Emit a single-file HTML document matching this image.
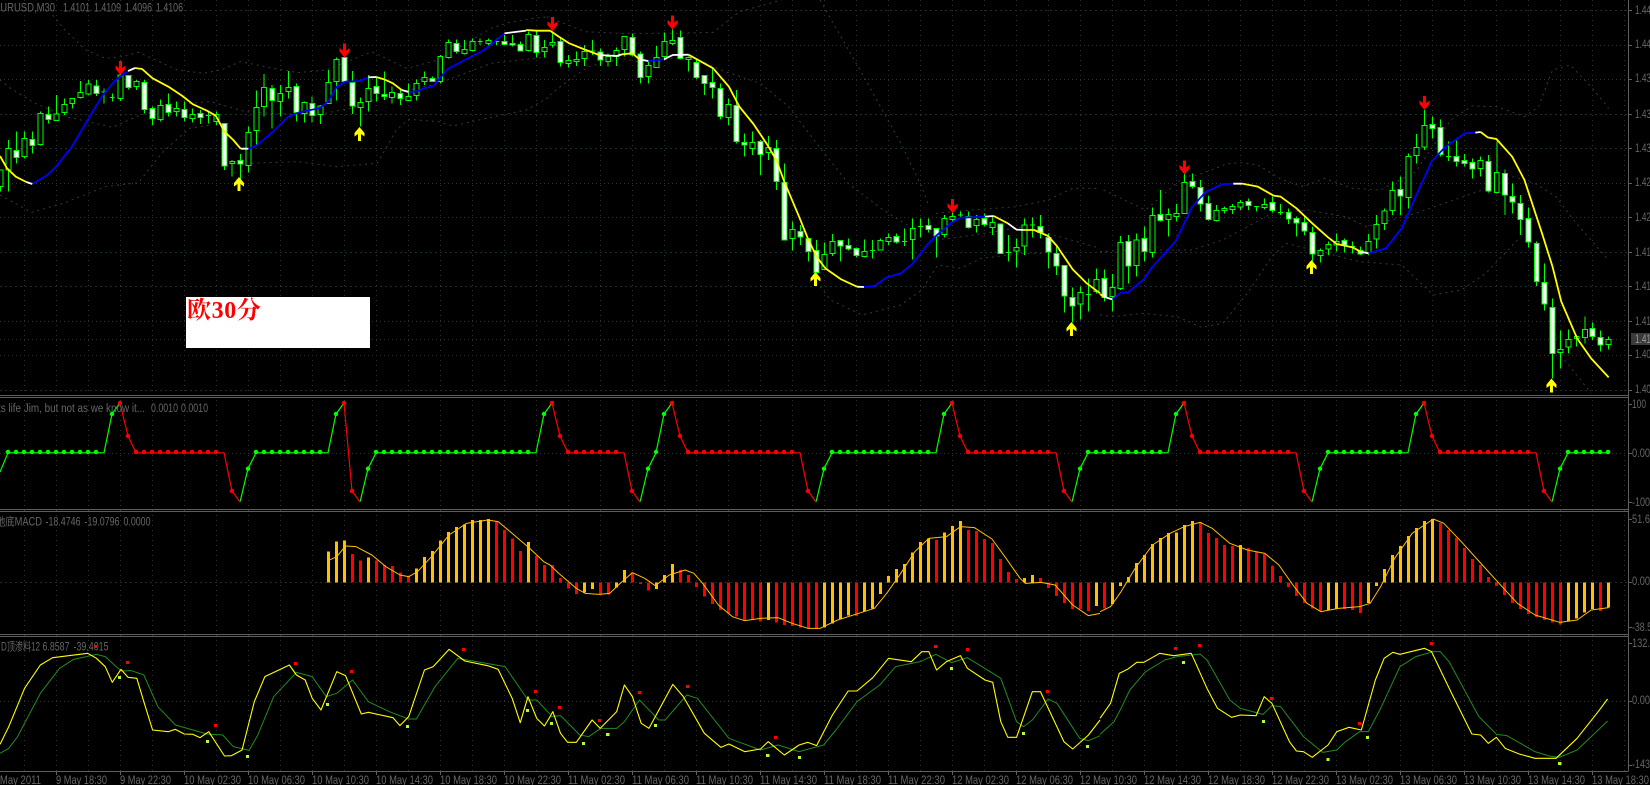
<!DOCTYPE html>
<html lang="zh"><head><meta charset="utf-8"><title>EURUSD,M30</title>
<style>
html,body{margin:0;padding:0;background:#000;width:1650px;height:785px;overflow:hidden}
svg{display:block}
path{fill:none;vector-effect:non-scaling-stroke}
text{font-family:"Liberation Sans","Noto Sans CJK SC",sans-serif;font-size:11.5px;fill:#666}
.w{stroke:#0f0;stroke-width:1;shape-rendering:crispEdges}
.u{stroke:#0f0;stroke-width:1;fill:#000;shape-rendering:crispEdges}
.d{stroke:#0f0;stroke-width:1;fill:#fff;shape-rendering:crispEdges}
.y{stroke:#ff0;stroke-width:1.8;stroke-linejoin:round}
.bl{stroke:#00f;stroke-width:1.8;stroke-linejoin:round}
.wh{stroke:#fff;stroke-width:1.8}
.b{stroke:#383838;stroke-width:1;stroke-dasharray:2 4}
.gd{stroke:#333;stroke-width:1;stroke-dasharray:1 3;shape-rendering:crispEdges}
.gt{stroke:#183030;stroke-width:1;stroke-dasharray:2 3;shape-rendering:crispEdges}
.lg{stroke:#0f0;stroke-width:1.2;stroke-linejoin:round}
.lr{stroke:#f00;stroke-width:1.2;stroke-linejoin:round}
.dg{stroke:#0f0;stroke-width:4.6;stroke-linecap:round;stroke-dasharray:0 8}
.dr{stroke:#f00;stroke-width:4.6;stroke-linecap:round;stroke-dasharray:0 8}
.pg{stroke:#0f0;stroke-width:4.4;stroke-linecap:round}
.pr{stroke:#f00;stroke-width:4.4;stroke-linecap:round}
.hg{stroke:#ffc000;stroke-width:3;shape-rendering:crispEdges}
.hr{stroke:#f00;stroke-width:3;shape-rendering:crispEdges}
.sg{stroke:#ffc000;stroke-width:1;stroke-linejoin:round}
.ky{stroke:#ff0;stroke-width:1.1;stroke-linejoin:round}
.kg{stroke:#228b22;stroke-width:1;stroke-linejoin:round}
.qr{stroke:#f00;stroke-width:3;shape-rendering:crispEdges}
.ql{stroke:#adff2f;stroke-width:3;shape-rendering:crispEdges}
.ax{stroke:#5e5e5e;stroke-width:1;shape-rendering:crispEdges}
.sep{stroke:#5e5e5e;stroke-width:1;shape-rendering:crispEdges}
</style></head><body>
<svg width="1650" height="785" viewBox="0 0 1650 785" xmlns="http://www.w3.org/2000/svg">
<defs>
<pattern id="vg" x="24" y="0" width="32" height="5" patternUnits="userSpaceOnUse"><rect width="1" height="1" fill="#303030"/></pattern>
<path id="ad" style="stroke:none;fill:#f00" d="M-1.5-14h3v7l3.5-2.5v3.5L0 0l-5-6v-3.5L-1.5-7z"/>
<path id="au" style="stroke:none;fill:#ff0" d="M-1.5 14h3v-7l3.5 2.5v-3.5L0 0l-5 6v3.5L-1.5 7z"/>
</defs>
<rect width="1650" height="785" fill="#000"/>
<rect x="0" y="0" width="1628" height="771" fill="url(#vg)"/>

<!-- main grid -->
<path class="gt" d="M0 10.5H1628M0 114.5H1628M0 148.5H1628M0 252.5H1628M0 286.5H1628M0 390.5H1628"/>
<path class="gd" d="M0 45.5H1628M0 79.5H1628M0 183.5H1628M0 217.5H1628M0 321.5H1628M0 339.5H1628M0 355.5H1628"/>

<!-- segment 1 -->
<g transform="scale(.3508 .33333)">
<path class="b" d="M150 45L185 90L245 150L300 175L345 170L395 157L450 183L505 210L580 220L630 210L685 185L780 205L850 218L930 210L1060 155L1160 205L1250 180L1400 85L1450 68L1520 55L1568 50"/>
<path class="b" d="M0 240L30 265L100 310L190 350L320 382L400 345L540 310L600 305L700 335L770 340L900 345L1000 325L1100 285L1250 250L1400 190L1568 170"/>
<path class="b" d="M0 585L90 637L180 610L300 560L395 548L460 460L540 385L600 375M700 490L850 485L960 500L1075 490L1130 390L1165 358L1250 365L1290 378L1400 352L1500 330L1568 290"/>
<path class="w" d="M2 510V575M24 420V575M47 395V490M70 395V475M92 395V460M115 335V437M138 320V370M161 285V362M184 295V345M206 295V325M229 243V295M252 240V285M275 240V288M297 265V310M320 280V305M343 220V303M366 225V268M389 240V270M412 240V340M435 320V375M458 298V365M480 280V350M503 305V350M526 305V365M549 325V368M571 330V372M594 335V370M617 335V375M640 370V510M662 480V530M686 462V545M708 380V518M731 272V435M753 222V350M776 255V385M799 255V350M822 213V295M845 250V365M868 305V368M890 290V368M914 315V372M936 210V312M959 172V302M982 170V245M1005 213V342M1028 292V380M1050 225V335M1073 230V305M1096 215V300M1118 260V310M1141 270V315M1164 250V302M1187 238V302M1210 215V255M1233 230V245M1255 165V250M1278 118V175M1301 118V160M1324 120V163M1347 115V155M1369 115V135M1392 115V138M1415 115V135M1438 105V135M1461 105V140M1484 125V155M1507 95V155M1529 95V172M1552 120V172"/>
<path class="u" d="M-5 510h14V560h-14zM17 445h14V510h-14zM63 415h14V470h-14zM108 340h14V434h-14zM154 342h14V361h-14zM177 314h14V338h-14zM199 295h14V311h-14zM222 278h14V293h-14zM245 252h14V282h-14zM336 225h14V296h-14zM382 245h14V259h-14zM451 317h14V358h-14zM496 325h14V334h-14zM542 344h14V356h-14zM610 343h14V365h-14zM655 484h14V490h-14zM701 397h14V496h-14zM724 322h14V392h-14zM746 263h14V320h-14zM792 280h14V304h-14zM815 262h14V274h-14zM861 308h14V340h-14zM907 318h14V344h-14zM929 247h14V310h-14zM952 178h14V244h-14zM1021 308h14V322h-14zM1043 265h14V304h-14zM1111 278h14V292h-14zM1157 289h14V301h-14zM1180 250h14V286h-14zM1203 233h14V244h-14zM1248 170h14V245h-14zM1271 127h14V172h-14zM1317 149h14V161h-14zM1340 124h14V152h-14zM1385 121h14V131h-14zM1500 104h14V151h-14zM1545 142h14V154h-14zM290 276h14M313 293h14M587 346h14M1362 124h14M1408 124h14"/>
<path class="d" d="M40 451h14V472h-14zM85 418h14V436h-14zM131 343h14V358h-14zM268 258h14V280h-14zM359 226h14V262h-14zM405 247h14V328h-14zM428 325h14V355h-14zM473 314h14V337h-14zM519 328h14V352h-14zM564 340h14V352h-14zM633 371h14V498h-14zM679 481h14V492h-14zM769 266h14V301h-14zM838 260h14V338h-14zM883 310h14V346h-14zM975 172h14V244h-14zM998 248h14V318h-14zM1066 260h14V280h-14zM1089 284h14V289h-14zM1134 280h14V296h-14zM1226 236h14V244h-14zM1294 130h14V155h-14zM1431 124h14V133h-14zM1454 130h14V135h-14zM1477 134h14V153h-14zM1522 106h14V157h-14z"/>
<path class="y" d="M0 468L20 505L45 530L75 546M385 204L405 207L435 235L480 260L520 288L550 313L590 332L615 347L640 395L665 420L686 446M1072 231L1095 238L1120 250L1145 270M1500 90L1530 92L1568 92"/>
<path class="bl" d="M92 552L135 525L160 500L205 440L250 360L290 290L325 245L345 228L365 213M708 446L730 438L775 398L822 350L850 338L885 330L910 325L935 305L960 260L985 245L1025 243L1050 232M1165 276L1190 274L1205 266L1235 258L1275 208L1325 180L1380 150L1415 120L1438 100"/>
<path class="wh" d="M75 546L92 552M365 213L385 204M686 446L708 446M1050 232L1072 231M1145 270L1165 276M1438 100L1500 92"/>
</g>

<!-- segment 2 -->
<g transform="translate(550 0) scale(.3508 .33333)">
<path class="b" d="M0 285L60 235L110 200L200 175L280 190L390 165L500 215L600 250L680 320L760 430L850 550L950 630L1025 680"/>
<path class="b" d="M-10 50L100 95L200 100L350 100L465 97L540 35L660 0"/>
<path class="b" d="M770 0L840 130L900 240L1000 430L1060 560L1080 620"/>
<path class="b" d="M770 860L800 900L890 945L1000 915L1060 870L1105 795L1170 805L1230 775L1350 760L1400 760"/>
<path class="b" d="M1100 720L1210 705L1350 680L1420 700L1568 745M1100 640L1180 632L1330 620L1420 600L1490 565L1568 565"/>
<path class="w" d="M7 100V142M30 115V200M53 165V203M75 155V198M98 135V198M121 120V165M144 145V198M166 160V200M189 142V198M212 108V170M235 100V170M258 155V250M281 180V250M304 138V203M326 98V180M349 88V135M372 92V178M395 170V215M418 180V237M440 225V285M463 205V295M486 250V358M509 295V375M532 270V430M555 400V470M577 395V465M600 420V525M623 408V480M646 420V570M668 490V722M691 665V752M714 675V735M737 715V785M760 720V820M782 728V810M805 702V768M828 720V785M851 715V752M874 742V772M896 718V772M919 720V775M942 715V752M965 700V735M988 700V730M1011 685V738M1034 655V778M1056 655V712M1079 655V698M1102 688V772M1125 645V712M1147 630V668M1170 635V655M1193 635V685M1216 645V698M1239 640V680M1261 650V705M1284 670V762M1307 705V785M1330 715V802M1353 655V765M1376 652V712M1398 645V715M1421 700V805M1444 740V825M1467 795V938M1489 862V968M1512 860V958M1535 835V935M1558 805V880"/>
<path class="u" d="M0 128h14V135h-14zM46 181h14V190h-14zM68 178h14V184h-14zM91 154h14V176h-14zM159 170h14V185h-14zM182 152h14V170h-14zM205 110h14V148h-14zM274 196h14V230h-14zM297 173h14V203h-14zM319 124h14V170h-14zM342 121h14V130h-14zM388 172h14V178h-14zM502 313h14V352h-14zM570 428h14V445h-14zM616 443h14V457h-14zM684 688h14V716h-14zM775 763h14V808h-14zM798 725h14V760h-14zM889 755h14V769h-14zM935 722h14V750h-14zM958 712h14V724h-14zM1027 686h14V718h-14zM1118 656h14V704h-14zM1140 650h14V658h-14zM1209 658h14V677h-14zM1254 668h14V682h-14zM1323 743h14V753h-14zM1346 675h14V738h-14zM1505 878h14V912h-14zM1551 838h14V875h-14zM114 153h14M912 751h14M1004 724h14M1049 680h14M1163 645h14M1300 757h14M1369 675h14M1528 884h14"/>
<path class="d" d="M23 125h14V187h-14zM137 156h14V180h-14zM228 113h14V165h-14zM251 162h14V232h-14zM365 112h14V175h-14zM411 187h14V232h-14zM433 227h14V250h-14zM456 248h14V262h-14zM479 265h14V350h-14zM525 317h14V425h-14zM548 428h14V435h-14zM593 425h14V463h-14zM639 445h14V545h-14zM661 547h14V720h-14zM707 695h14V711h-14zM730 715h14V754h-14zM753 752h14V817h-14zM821 722h14V738h-14zM844 737h14V747h-14zM867 746h14V766h-14zM981 710h14V726h-14zM1072 677h14V688h-14zM1095 686h14V708h-14zM1186 650h14V682h-14zM1232 655h14V674h-14zM1277 672h14V760h-14zM1391 680h14V697h-14zM1414 712h14V756h-14zM1437 760h14V798h-14zM1460 797h14V888h-14zM1482 893h14V918h-14z"/>
<path class="y" d="M0 92L25 110L55 130L95 147L140 165M205 163L235 160L255 178M395 164L465 205L510 260L540 320L580 372L620 435L645 480L668 545L710 650L735 715L760 770L785 805L830 838L875 860M1265 648L1305 670M1350 690L1380 690L1420 708L1445 738L1490 808L1530 850L1568 880"/>
<path class="bl" d="M280 183L325 178M895 861L925 858L960 832L1000 820L1035 790L1075 735L1100 708L1145 668L1170 653L1240 650"/>
<path class="wh" d="M140 165L190 168L205 163M255 178L280 183M325 178L350 165L395 164M875 860L895 861M1240 650L1265 648M1305 670L1330 689L1350 690"/>
</g>

<!-- segment 3 -->
<g transform="translate(1100 0) scale(.3508 .33333)">
<path class="b" d="M10 570L130 630L240 530L280 525L360 492L400 488L450 495L520 540L580 560L640 535L720 565L800 570L900 515L1000 360L1060 318L1130 320L1210 350L1250 320L1290 210L1340 195L1400 260L1450 325"/>
<path class="b" d="M0 755L80 750L260 750L350 720L490 640L590 630L700 650L760 680L900 640L1090 570L1180 530L1240 550L1300 590L1350 660L1445 775"/>
<path class="b" d="M0 945L40 950L120 940L220 950L290 982L350 970L420 880L490 770L530 730L740 785L860 795L950 885L1030 870L1100 820L1190 720M1290 1040L1340 1100L1400 1180"/>
<path class="w" d="M13 808V905M36 822V935M59 708V870M81 705V850M104 700V830M127 680V785M150 622V772M172 570V665M195 625V710M218 612V665M241 520V642M264 520V565M287 540V635M309 588V662M332 615V665M355 620V640M378 612V642M401 600V630M423 595V630M446 618V635M469 595V628M492 590V638M515 612V645M538 625V672M560 650V710M583 650V705M606 680V785M629 745V788M651 725V765M674 700V755M697 715V758M720 725V760M743 740V765M765 702V765M788 645V745M811 625V690M834 545V645M857 530V645M880 460V625M902 402V490M925 330V450M948 350V415M971 358V470M993 425V483M1016 422V500M1039 462V500M1062 475V535M1085 470V530M1108 465V578M1131 425V580M1154 508V645M1176 550V640M1199 585V705M1222 622V742M1245 725V858M1267 790V932M1290 895V1135M1313 992V1105M1336 988V1060M1359 1005V1040M1382 950V1030M1404 968V1020M1427 992V1055M1450 1010V1048"/>
<path class="u" d="M29 862h14V890h-14zM52 727h14V866h-14zM97 720h14V797h-14zM143 646h14V757h-14zM188 644h14V658h-14zM211 640h14V650h-14zM234 547h14V640h-14zM325 631h14V661h-14zM348 625h14V631h-14zM371 619h14V628h-14zM394 608h14V621h-14zM462 613h14V622h-14zM622 751h14V766h-14zM644 733h14V747h-14zM667 725h14V735h-14zM758 725h14V757h-14zM781 673h14V717h-14zM804 633h14V670h-14zM827 571h14V631h-14zM873 469h14V593h-14zM895 442h14V466h-14zM918 376h14V441h-14zM1078 482h14V505h-14zM1124 518h14V577h-14zM1306 1048h14V1057h-14zM1329 1019h14V1041h-14zM1352 1010h14V1016h-14zM1375 988h14V1012h-14zM1443 1019h14V1033h-14zM439 619h14M508 638h14M713 739h14M986 469h14"/>
<path class="d" d="M6 835h14V892h-14zM74 725h14V798h-14zM120 716h14V754h-14zM165 643h14V661h-14zM257 545h14V559h-14zM280 563h14V612h-14zM302 610h14V659h-14zM416 605h14V616h-14zM485 607h14V632h-14zM531 638h14V657h-14zM553 656h14V669h-14zM576 668h14V693h-14zM599 697h14V762h-14zM690 722h14V735h-14zM736 752h14V762h-14zM850 568h14V588h-14zM941 373h14V385h-14zM964 383h14V463h-14zM1009 470h14V484h-14zM1032 482h14V490h-14zM1055 487h14V507h-14zM1101 485h14V573h-14zM1147 521h14V585h-14zM1169 590h14V606h-14zM1192 611h14V658h-14zM1215 656h14V726h-14zM1238 731h14V845h-14zM1260 848h14V912h-14zM1283 922h14V1060h-14zM1397 986h14V1009h-14zM1420 1013h14V1035h-14z"/>
<path class="y" d="M0 882L10 890M405 551L450 560L495 587L515 590L560 625L605 670L650 712L675 732L720 742L743 755M1085 396L1105 412L1130 417L1175 470L1210 540L1260 700L1290 800L1315 905L1360 1015L1400 1075L1450 1132"/>
<path class="bl" d="M35 898L60 878L80 877L125 838L150 800L215 725L262 622L300 577L350 552L380 551M765 760L815 745L860 685L900 590L945 485L985 440L1040 400L1070 398"/>
<path class="wh" d="M10 890L35 898M380 551L405 551M743 755L765 760M1070 398L1085 396"/>
</g>

<!-- arrows -->
<use href="#ad" x="120.5" y="75"/><use href="#ad" x="344.5" y="57.5"/><use href="#ad" x="552.5" y="31"/><use href="#ad" x="672.5" y="29.5"/><use href="#ad" x="952.5" y="213"/><use href="#ad" x="1184.5" y="174.5"/><use href="#ad" x="1424.5" y="110"/>
<use href="#au" x="239" y="177"/><use href="#au" x="359.5" y="127"/><use href="#au" x="815.5" y="272"/><use href="#au" x="1071.5" y="322"/><use href="#au" x="1311.5" y="260"/><use href="#au" x="1551.5" y="378.5"/>

<!-- white label -->
<rect x="186" y="297" width="184" height="51" fill="#fff"/>
<text x="187" y="318" style="font-family:'Liberation Serif','Noto Serif CJK SC',serif;font-size:24px;font-weight:bold;fill:#f00;letter-spacing:.6px">欧30分</text>

<!-- legend main -->
<text x="-6" y="11.5" textLength="61" lengthAdjust="spacingAndGlyphs">EURUSD,M30</text>
<text x="63" y="11.5" textLength="27" lengthAdjust="spacingAndGlyphs">1.4101</text>
<text x="94" y="11.5" textLength="27" lengthAdjust="spacingAndGlyphs">1.4109</text>
<text x="125" y="11.5" textLength="27" lengthAdjust="spacingAndGlyphs">1.4096</text>
<text x="156" y="11.5" textLength="27" lengthAdjust="spacingAndGlyphs">1.4106</text>

<!-- panel separators -->
<path class="sep" d="M0 395.5H1628M0 397.5H1628M0 509.5H1628M0 511.5H1628M0 634.5H1628M0 636.5H1628"/>

<!-- panel 1 -->
<path class="gd" d="M0 453.5H1628"/>
<path class="lg" d="M0 472L8 452.8H104L112 414L120 403M240 502L248 468.7L256 452.8H328L336 414L344 403M360 502L368 468.7L376 452.8H536L544 414L552 403M640 502L648 468.7L656 452.8L664 414L672 403M816 502L824 468.7L832 452.8H936L944 414L952 403M1072 502L1080 468.7L1088 452.8H1168L1176 414L1184 403M1312 502L1320 468.7L1328 452.8H1408L1416 414L1424 403M1552 502L1560 468.7L1568 452.8H1608"/>
<path class="lr" d="M120 403L128 436L136 452.8H224L232 491L240 502M344 403L352 491L360 502M552 403L560 436L568 452.8H624L632 491L640 502M672 403L680 436L688 452.8H800L808 491L816 502M952 403L960 436L968 452.8H1056L1064 491L1072 502M1184 403L1192 436L1200 452.8H1296L1304 491L1312 502M1424 403L1432 436L1440 452.8H1536L1544 491L1552 502"/>
<path class="dg" d="M8 452H97M256 452H321M376 452H529M832 452H929M1088 452H1161M1328 452H1401M1568 452H1609"/>
<path class="dr" d="M136 452H217M568 452H617M688 452H793M968 452H1049M1200 452H1289M1440 452H1529"/>
<path class="pg" d="M112 414h.01M248 468.7h.01M336 414h.01M368 468.7h.01M544 414h.01M648 468.7h.01M656 452h.01M664 414h.01M824 468.7h.01M944 414h.01M1080 468.7h.01M1176 414h.01M1320 468.7h.01M1416 414h.01M1560 468.7h.01"/>
<path class="pr" d="M120 403h.01M128 436h.01M232 491h.01M344 403h.01M352 491h.01M552 403h.01M560 436h.01M632 491h.01M672 403h.01M680 436h.01M808 491h.01M952 403h.01M960 436h.01M1064 491h.01M1184 403h.01M1192 436h.01M1304 491h.01M1424 403h.01M1432 436h.01M1544 491h.01"/>
<text x="-2" y="412" textLength="147" lengthAdjust="spacingAndGlyphs">ts life Jim, but not as we know it...</text>
<text x="151" y="412" textLength="27" lengthAdjust="spacingAndGlyphs">0.0010</text>
<text x="181" y="412" textLength="27" lengthAdjust="spacingAndGlyphs">0.0010</text>

<!-- panel 2 -->
<path class="gt" d="M0 582.5H1628"/>
<g transform="translate(.5 395) scale(1 .33333)">
<path class="hg" d="M328 562V470M336 562V440M344 562V437M368 562V488M416 562V520M424 562V486M432 562V468M440 562V437M448 562V411M456 562V396M464 562V388M472 562V375M480 562V375M488 562V372M528 562V441M584 562V592M592 562V582M616 562V577M624 562V525M656 562V582M664 562V540M672 562V507M768 562V675M824 562V697M832 562V685M840 562V672M848 562V662M864 562V650M872 562V640M880 562V597M888 562V543M896 562V522M904 562V507M912 562V472M920 562V441M928 562V430M944 562V412M952 562V393M960 562V378M1024 562V549M1032 562V540M1096 562V633M1112 562V627M1120 562V573M1128 562V546M1136 562V504M1144 562V480M1152 562V447M1160 562V429M1168 562V414M1176 562V412M1184 562V390M1192 562V378M1240 562V450M1328 562V645M1336 562V640M1368 562V624M1376 562V573M1384 562V522M1392 562V480M1400 562V453M1408 562V423M1416 562V399M1424 562V378M1432 562V372M1568 562V680M1576 562V670M1584 562V652M1592 562V642M1608 562V638"/>
<path class="hr" d="M352 562V477M360 562V497M376 562V497M384 562V510M392 562V513M400 562V533M408 562V543M496 562V378M504 562V405M512 562V431M520 562V468M536 562V483M544 562V510M552 562V510M560 562V549M568 562V580M576 562V597M600 562V598M608 562V598M632 562V532M640 562V567M648 562V587M680 562V525M688 562V540M696 562V576M704 562V605M712 562V627M720 562V645M728 562V655M736 562V665M744 562V677M752 562V675M760 562V680M776 562V683M784 562V690M792 562V693M800 562V697M808 562V700M816 562V702M856 562V663M936 562V435M968 562V405M976 562V408M984 562V432M992 562V444M1000 562V492M1008 562V531M1016 562V552M1040 562V549M1048 562V579M1056 562V603M1064 562V624M1072 562V642M1080 562V642M1088 562V648M1104 562V640M1200 562V381M1208 562V414M1216 562V429M1224 562V450M1232 562V453M1248 562V459M1256 562V471M1264 562V477M1272 562V513M1280 562V543M1288 562V576M1296 562V603M1304 562V624M1312 562V640M1320 562V648M1344 562V642M1352 562V645M1360 562V654M1440 562V384M1448 562V405M1456 562V429M1464 562V459M1472 562V492M1480 562V510M1488 562V546M1496 562V573M1504 562V600M1512 562V624M1520 562V642M1528 562V657M1536 562V666M1544 562V675M1552 562V682M1560 562V688M1600 562V648"/>
</g>
<g transform="translate(0 395) scale(.3508 .33333)">
<path class="sg" d="M935 497L960 485L985 453L1015 455L1060 480L1100 515L1140 540L1165 545L1190 530L1230 485L1280 420L1330 385L1390 375L1420 380L1460 415L1510 460L1550 500L1568 510"/>
</g>
<g transform="translate(550 395) scale(.3508 .33333)">
<path class="sg" d="M0 510L25 535L75 580L100 595L140 598L170 595L200 565L235 533L270 550L300 572L340 540L385 525L410 535L435 565L480 630L520 665L555 677L600 670L650 668L690 685L735 700L770 700L820 675L880 655L925 640L960 595L1000 535L1040 470L1080 430L1130 425L1170 395L1210 398L1260 432L1300 490L1340 550L1355 565L1400 562L1440 570L1490 630L1535 662L1568 655"/>
</g>
<g transform="translate(1100 395) scale(.3508 .33333)">
<path class="sg" d="M0 650L30 635L60 590L100 520L150 450L200 415L240 395L285 382L320 400L370 445L420 465L470 475L510 510L550 570L590 625L630 650L680 640L740 635L770 625L800 575L840 490L890 415L950 372L980 385L1030 440L1090 510L1140 568L1190 625L1240 660L1310 682L1360 675L1400 645L1450 638"/>
</g>
<text x="-4" y="525.7" textLength="46" lengthAdjust="spacingAndGlyphs">地底MACD</text>
<text x="45.5" y="525.7" textLength="35" lengthAdjust="spacingAndGlyphs">-18.4746</text>
<text x="84.5" y="525.7" textLength="35" lengthAdjust="spacingAndGlyphs">-19.0796</text>
<text x="123.5" y="525.7" textLength="27" lengthAdjust="spacingAndGlyphs">0.0000</text>

<!-- panel 3 -->
<path class="gd" d="M0 701.5H1628"/>
<text x="1" y="650.7" textLength="39" lengthAdjust="spacingAndGlyphs">D顶渗料12</text>
<text x="42.5" y="650.7" textLength="27" lengthAdjust="spacingAndGlyphs">6.8587</text>
<text x="73.5" y="650.7" textLength="35" lengthAdjust="spacingAndGlyphs">-39.4015</text>
<g transform="translate(0 395) scale(.3508 .33333)">
<path class="kg" d="M0 1075L25 1060L50 1025L115 895L170 820L210 793L275 778L300 785L345 828L375 827L410 840L450 935L500 990L590 1017L635 1020L665 1055L710 1066L735 1020L780 905L845 832L890 845L930 905L960 895L1005 855L1050 920L1110 950L1165 972L1187 972L1240 875L1305 790L1440 815L1505 915L1530 915L1568 958"/>
<path class="ky" d="M0 1048L25 995L70 880L115 810L150 788L250 775L275 790L300 815L320 862L345 823L365 847L390 850L410 920L435 1005L480 1010L500 1003L525 1017L550 1018L570 1028L595 1010L640 1083L660 1082L690 1065L725 920L755 845L825 810L845 840L870 855L890 910L915 945L960 830L985 842L1030 957L1050 952L1120 968L1140 992L1165 965L1210 825L1235 815L1280 763L1325 798L1390 812L1420 823L1460 910L1483 983L1505 905L1530 970L1552 993L1568 965"/>
<path class="qr" d="M268 754h9M359 802h9M610 991h9M838 805h9M998 829h9M1317 763h9M1522 889h9"/>
<path class="ql" d="M336 847h9M587 1039h9M701 1084h9M929 928h9M1157 994h9M1499 946h9"/>
</g>
<g transform="translate(550 395) scale(.3508 .33333)">
<path class="kg" d="M0 965L30 962L85 1020L110 1025L145 1000L190 1000L212 980L255 915L310 975L328 975L390 900L420 910L510 1030L600 1065L650 1050L710 1070L780 1050L815 1005L875 920L940 870L985 815L1055 800L1100 778L1145 803L1190 788L1285 850L1330 980L1350 995L1375 975L1420 912L1445 925L1510 1030L1535 1037L1568 1022"/>
<path class="ky" d="M0 965L8 950L30 1015L50 1042L75 1042L120 975L143 1000L190 950L212 870L235 905L260 985L282 1000L350 868L380 905L440 1015L487 1057L510 1047L555 1070L600 1062L622 1040L668 1080L710 1050L735 1042L760 1052L805 960L850 888L875 888L920 848L965 790L1030 800L1060 770L1080 770L1102 825L1130 800L1170 782L1190 820L1240 855L1262 862L1285 980L1305 1027L1330 1027L1375 890L1398 890L1465 1040L1490 1062L1535 1020L1568 975"/>
<path class="qr" d="M23 937h9M137 976h9M251 892h9M388 874h9M639 1027h9M1095 754h9M1186 763h9M1414 889h9"/>
<path class="ql" d="M0 985h9M91 1045h9M160 1018h9M296 991h9M616 1081h9M707 1087h9M1140 820h9M1345 1015h9M1528 1054h9"/>
</g>
<g transform="translate(1100 395) scale(.3508 .33333)">
<path class="kg" d="M0 1018L40 980L60 940L85 885L130 830L185 795L220 785L285 777L305 795L370 915L400 940L465 958L490 932L515 935L580 1025L635 1072L675 1065L700 1040L740 1010L765 1010L800 940L855 815L900 785L950 770L970 770L995 800L1080 965L1130 1018L1160 1022L1240 1070L1280 1083L1310 1087L1360 1065L1410 1015L1447 978"/>
<path class="ky" d="M0 970L30 925L55 835L80 822L105 802L125 802L170 775L210 782L260 775L305 880L335 940L375 967L400 960L445 962L468 905L490 925L540 1040L560 1068L580 1070L605 1087L650 1050L675 1010L710 997L745 1005L785 855L810 790L835 772L855 778L925 760L945 770L1000 890L1060 1017L1085 1020L1107 1045L1130 1027L1155 1060L1195 1077L1240 1090L1300 1090L1360 1030L1420 950L1447 912"/>
<path class="qr" d="M211 760h9M279 751h9M485 910h9M736 985h9M941 745h9"/>
<path class="ql" d="M234 802h9M462 979h9M645 1093h9M758 1027h9M1306 1105h9"/>
</g>

<!-- axes -->
<path class="ax" d="M1628.5 0V771M0 771.5H1628.5"/>
<path class="ax" d="M1628 10.5h4M1628 45.5h4M1628 79.5h4M1628 114.5h4M1628 148.5h4M1628 183.5h4M1628 217.5h4M1628 252.5h4M1628 286.5h4M1628 321.5h4M1628 355.5h4M1628 390.5h4M1628 404.5h4M1628 453.5h4M1628 502.5h4M1628 519.5h4M1628 582.5h4M1628 627.5h4M1628 643.5h4M1628 701.5h4M1628 765.5h4"/>
<path class="ax" d="M56.5 771v4M120.5 771v4M184.5 771v4M248.5 771v4M312.5 771v4M376.5 771v4M440.5 771v4M504.5 771v4M568.5 771v4M632.5 771v4M696.5 771v4M760.5 771v4M824.5 771v4M888.5 771v4M952.5 771v4M1016.5 771v4M1080.5 771v4M1144.5 771v4M1208.5 771v4M1272.5 771v4M1336.5 771v4M1400.5 771v4M1464.5 771v4M1528.5 771v4M1592.5 771v4"/>
<rect x="1631" y="333" width="19" height="12" fill="#3a3a3a"/>
<g>
<text x="1635" y="14" textLength="16" lengthAdjust="spacingAndGlyphs">1.44</text>
<text x="1635" y="48" textLength="16" lengthAdjust="spacingAndGlyphs">1.44</text>
<text x="1635" y="82" textLength="16" lengthAdjust="spacingAndGlyphs">1.43</text>
<text x="1635" y="118" textLength="16" lengthAdjust="spacingAndGlyphs">1.43</text>
<text x="1635" y="152" textLength="16" lengthAdjust="spacingAndGlyphs">1.43</text>
<text x="1635" y="186" textLength="16" lengthAdjust="spacingAndGlyphs">1.42</text>
<text x="1635" y="221" textLength="16" lengthAdjust="spacingAndGlyphs">1.42</text>
<text x="1635" y="256" textLength="16" lengthAdjust="spacingAndGlyphs">1.41</text>
<text x="1635" y="290" textLength="16" lengthAdjust="spacingAndGlyphs">1.41</text>
<text x="1635" y="325" textLength="16" lengthAdjust="spacingAndGlyphs">1.41</text>
<text x="1635" y="343" textLength="16" lengthAdjust="spacingAndGlyphs" style="fill:#9a9a9a">1.41</text>
<text x="1635" y="358" textLength="16" lengthAdjust="spacingAndGlyphs">1.40</text>
<text x="1635" y="393" textLength="16" lengthAdjust="spacingAndGlyphs">1.40</text>
<text x="1632" y="408" textLength="14" lengthAdjust="spacingAndGlyphs">100</text>
<text x="1632" y="457" textLength="18" lengthAdjust="spacingAndGlyphs">0.00</text>
<text x="1632" y="506" textLength="18" lengthAdjust="spacingAndGlyphs">-100</text>
<text x="1632" y="523" textLength="18" lengthAdjust="spacingAndGlyphs">51.6</text>
<text x="1632" y="585" textLength="18" lengthAdjust="spacingAndGlyphs">0.00</text>
<text x="1632" y="631" textLength="20" lengthAdjust="spacingAndGlyphs">-38.5</text>
<text x="1632" y="647" textLength="18" lengthAdjust="spacingAndGlyphs">132.</text>
<text x="1632" y="704" textLength="18" lengthAdjust="spacingAndGlyphs">0.00</text>
<text x="1632" y="768" textLength="18" lengthAdjust="spacingAndGlyphs">-143</text>
</g>

<!-- dates -->
<g>
<text x="-8" y="784" textLength="49" lengthAdjust="spacingAndGlyphs">9 May 2011</text>
<text x="56" y="784" textLength="51" lengthAdjust="spacingAndGlyphs">9 May 18:30</text>
<text x="120" y="784" textLength="51" lengthAdjust="spacingAndGlyphs">9 May 22:30</text>
<text x="184" y="784" textLength="57" lengthAdjust="spacingAndGlyphs">10 May 02:30</text>
<text x="248" y="784" textLength="57" lengthAdjust="spacingAndGlyphs">10 May 06:30</text>
<text x="312" y="784" textLength="57" lengthAdjust="spacingAndGlyphs">10 May 10:30</text>
<text x="376" y="784" textLength="57" lengthAdjust="spacingAndGlyphs">10 May 14:30</text>
<text x="440" y="784" textLength="57" lengthAdjust="spacingAndGlyphs">10 May 18:30</text>
<text x="504" y="784" textLength="57" lengthAdjust="spacingAndGlyphs">10 May 22:30</text>
<text x="568" y="784" textLength="57" lengthAdjust="spacingAndGlyphs">11 May 02:30</text>
<text x="632" y="784" textLength="57" lengthAdjust="spacingAndGlyphs">11 May 06:30</text>
<text x="696" y="784" textLength="57" lengthAdjust="spacingAndGlyphs">11 May 10:30</text>
<text x="760" y="784" textLength="57" lengthAdjust="spacingAndGlyphs">11 May 14:30</text>
<text x="824" y="784" textLength="57" lengthAdjust="spacingAndGlyphs">11 May 18:30</text>
<text x="888" y="784" textLength="57" lengthAdjust="spacingAndGlyphs">11 May 22:30</text>
<text x="952" y="784" textLength="57" lengthAdjust="spacingAndGlyphs">12 May 02:30</text>
<text x="1016" y="784" textLength="57" lengthAdjust="spacingAndGlyphs">12 May 06:30</text>
<text x="1080" y="784" textLength="57" lengthAdjust="spacingAndGlyphs">12 May 10:30</text>
<text x="1144" y="784" textLength="57" lengthAdjust="spacingAndGlyphs">12 May 14:30</text>
<text x="1208" y="784" textLength="57" lengthAdjust="spacingAndGlyphs">12 May 18:30</text>
<text x="1272" y="784" textLength="57" lengthAdjust="spacingAndGlyphs">12 May 22:30</text>
<text x="1336" y="784" textLength="57" lengthAdjust="spacingAndGlyphs">13 May 02:30</text>
<text x="1400" y="784" textLength="57" lengthAdjust="spacingAndGlyphs">13 May 06:30</text>
<text x="1464" y="784" textLength="57" lengthAdjust="spacingAndGlyphs">13 May 10:30</text>
<text x="1528" y="784" textLength="57" lengthAdjust="spacingAndGlyphs">13 May 14:30</text>
<text x="1592" y="784" textLength="57" lengthAdjust="spacingAndGlyphs">13 May 18:30</text>
</g>
</svg>
</body></html>
